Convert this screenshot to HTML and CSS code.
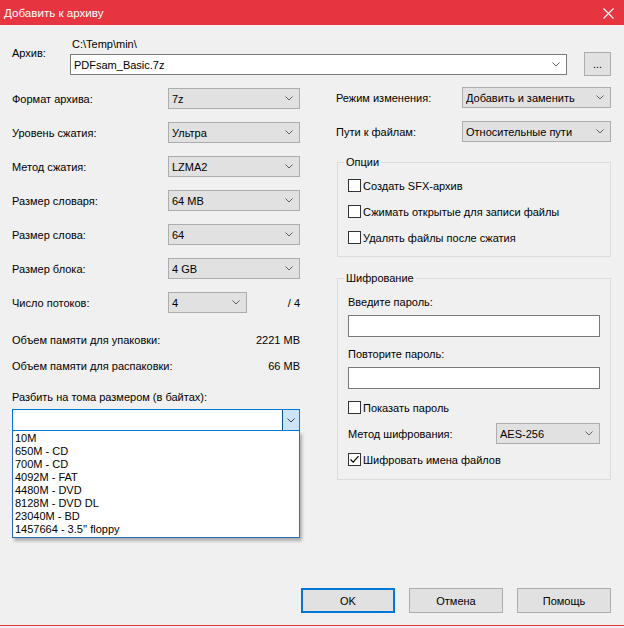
FILE: index.html
```html
<!DOCTYPE html>
<html lang="ru">
<head>
<meta charset="utf-8">
<title>Добавить к архиву</title>
<link rel="stylesheet" href="styles.css">
</head>
<body>
<div class="window">
  <header class="titlebar">
    <span class="title">Добавить к архиву</span>
    <svg class="close" width="11" height="11" viewBox="0 0 11 11"><path d="M0.5 0.5 L10.5 10.5 M10.5 0.5 L0.5 10.5" stroke="#fff" stroke-width="1.1" fill="none"/></svg>
  </header>

  <main class="content">
    <section class="archive">
      <span class="archive-label">Архив:</span>
      <span class="archive-path">C:\Temp\min\</span>
      <div class="combo combo-white archive-combo"><span class="combo-text">PDFsam_Basic.7z</span><svg class="chev" width="8" height="5" viewBox="0 0 8 5"><path d="M0.5 0.5 L4 4 L7.5 0.5" fill="none" stroke="#606060"/></svg></div>
      <div class="btn btn-browse">...</div>
    </section>

    <div class="columns">
      <div class="col-left">
        <div class="row"><span class="lbl">Формат архива:</span><div class="combo w132"><span class="combo-text">7z</span><svg class="chev" width="8" height="5" viewBox="0 0 8 5"><path d="M0.5 0.5 L4 4 L7.5 0.5" fill="none" stroke="#606060"/></svg></div></div>
        <div class="row"><span class="lbl">Уровень сжатия:</span><div class="combo w132"><span class="combo-text">Ультра</span><svg class="chev" width="8" height="5" viewBox="0 0 8 5"><path d="M0.5 0.5 L4 4 L7.5 0.5" fill="none" stroke="#606060"/></svg></div></div>
        <div class="row"><span class="lbl">Метод сжатия:</span><div class="combo w132"><span class="combo-text">LZMA2</span><svg class="chev" width="8" height="5" viewBox="0 0 8 5"><path d="M0.5 0.5 L4 4 L7.5 0.5" fill="none" stroke="#606060"/></svg></div></div>
        <div class="row"><span class="lbl">Размер словаря:</span><div class="combo w132"><span class="combo-text">64 MB</span><svg class="chev" width="8" height="5" viewBox="0 0 8 5"><path d="M0.5 0.5 L4 4 L7.5 0.5" fill="none" stroke="#606060"/></svg></div></div>
        <div class="row"><span class="lbl">Размер слова:</span><div class="combo w132"><span class="combo-text">64</span><svg class="chev" width="8" height="5" viewBox="0 0 8 5"><path d="M0.5 0.5 L4 4 L7.5 0.5" fill="none" stroke="#606060"/></svg></div></div>
        <div class="row"><span class="lbl">Размер блока:</span><div class="combo w132"><span class="combo-text">4 GB</span><svg class="chev" width="8" height="5" viewBox="0 0 8 5"><path d="M0.5 0.5 L4 4 L7.5 0.5" fill="none" stroke="#606060"/></svg></div></div>
        <div class="row"><span class="lbl">Число потоков:</span><div class="combo w79"><span class="combo-text">4</span><svg class="chev" width="8" height="5" viewBox="0 0 8 5"><path d="M0.5 0.5 L4 4 L7.5 0.5" fill="none" stroke="#606060"/></svg></div><span class="of">/ 4</span></div>

        <div class="mem mem1"><span>Объем памяти для упаковки:</span><span>2221 MB</span></div>
        <div class="mem mem2"><span>Объем памяти для распаковки:</span><span>66 MB</span></div>

        <div class="split-label">Разбить на тома размером (в байтах):</div>
        <div class="split">
          <div class="split-combo">
            <span class="split-text"></span>
            <span class="split-btn"><svg width="8" height="5" viewBox="0 0 8 5"><path d="M0.5 0.5 L4 4 L7.5 0.5" fill="none" stroke="#404040"/></svg></span>
          </div>
          <ul class="dropdown">
            <li>10M</li>
            <li>650M - CD</li>
            <li>700M - CD</li>
            <li>4092M - FAT</li>
            <li>4480M - DVD</li>
            <li>8128M - DVD DL</li>
            <li>23040M - BD</li>
            <li>1457664 - 3.5'' floppy</li>
          </ul>
        </div>
      </div>

      <div class="col-right">
        <div class="rrow"><span class="rlbl">Режим изменения:</span><div class="combo w149"><span class="combo-text">Добавить и заменить</span><svg class="chev" width="8" height="5" viewBox="0 0 8 5"><path d="M0.5 0.5 L4 4 L7.5 0.5" fill="none" stroke="#606060"/></svg></div></div>
        <div class="rrow"><span class="rlbl">Пути к файлам:</span><div class="combo w149"><span class="combo-text">Относительные пути</span><svg class="chev" width="8" height="5" viewBox="0 0 8 5"><path d="M0.5 0.5 L4 4 L7.5 0.5" fill="none" stroke="#606060"/></svg></div></div>

        <fieldset class="group group-options">
          <legend>Опции</legend>
          <div class="check first"><span class="box"></span><span>Создать SFX-архив</span></div>
          <div class="check"><span class="box"></span><span>Сжимать открытые для записи файлы</span></div>
          <div class="check"><span class="box"></span><span>Удалять файлы после сжатия</span></div>
        </fieldset>

        <fieldset class="group group-enc">
          <legend>Шифрование</legend>
          <div class="enc-label first">Введите пароль:</div>
          <div class="input"></div>
          <div class="enc-label">Повторите пароль:</div>
          <div class="input"></div>
          <div class="check show-pass"><span class="box"></span><span>Показать пароль</span></div>
          <div class="enc-method"><span>Метод шифрования:</span><div class="combo w104"><span class="combo-text">AES-256</span><svg class="chev" width="8" height="5" viewBox="0 0 8 5"><path d="M0.5 0.5 L4 4 L7.5 0.5" fill="none" stroke="#606060"/></svg></div></div>
          <div class="check enc-names"><span class="box"><svg width="11" height="11" viewBox="0 0 11 11"><path d="M1.5 5.5 L4.2 8.2 L9.5 2.2" fill="none" stroke="#000" stroke-width="1.2"/></svg></span><span>Шифровать имена файлов</span></div>
        </fieldset>
      </div>
    </div>
  </main>

  <footer class="footer">
    <div class="btn btn-ok">OK</div>
    <div class="btn">Отмена</div>
    <div class="btn">Помощь</div>
  </footer>
  <div class="bottom-line"></div>
</div>
</body>
</html>
```

FILE: styles.css
```css
* { box-sizing: border-box; }

html, body {
  margin: 0;
  padding: 0;
}

body {
  width: 624px;
  height: 628px;
  overflow: hidden;
  background: #f0f0f0;
  font-family: "Liberation Sans", Arial, sans-serif;
  font-size: 11px;
  line-height: 14px;
  color: #000;
}

.window {
  width: 624px;
  height: 628px;
  display: flex;
  flex-direction: column;
}

.titlebar {
  height: 25px;
  flex: none;
  background: #e63540;
  color: #fff;
  display: flex;
  align-items: center;
  padding: 0 10px 0 4px;
}

.title {
  font-size: 11.6px;
  flex: 1;
}

.close {
  display: block;
  margin-top: 1px;
}

.content {
  padding: 0 13px 0 12px;
}

/* archive row */
.archive {
  margin-top: 13px;
  display: grid;
  grid-template-columns: 58px 1fr 17px 27px;
  grid-template-rows: 16px 22px;
}

.archive-label {
  grid-row: 1 / 3;
  grid-column: 1;
  padding-top: 8px;
}

.archive-path {
  grid-row: 1;
  grid-column: 2;
  padding-left: 2px;
  line-height: 13px;
}

.archive-combo {
  grid-row: 2;
  grid-column: 2;
  height: 22px;
}

.btn-browse {
  grid-row: 2;
  grid-column: 4;
  margin-top: -2px;
  height: 24px;
  width: 27px;
  line-height: 18px;
}

/* combo */
.combo {
  height: 21px;
  background: #e1e1e1;
  border: 1px solid #adadad;
  display: flex;
  align-items: center;
  padding: 0 6px 0 3px;
}

.combo-white {
  background: #fff;
  border-color: #7a7a7a;
}

.combo-text {
  flex: 1;
  white-space: nowrap;
  overflow: hidden;
}

.chev {
  display: block;
  flex: none;
}

.w132 { width: 132px; }
.w79 { width: 79px; }
.w149 { width: 149px; }
.w104 { width: 104px; }

/* columns */
.columns {
  margin-top: 12px;
  display: flex;
  gap: 36px;
}

.col-left {
  width: 288px;
  flex: none;
}

.col-right {
  width: 275px;
  flex: none;
  margin-top: -1px;
}

.row {
  display: flex;
  align-items: center;
  height: 21px;
  margin-bottom: 13px;
}

.lbl {
  width: 156px;
  flex: none;
}

.of {
  margin-left: auto;
}

.mem {
  display: flex;
  justify-content: space-between;
  height: 14px;
}

.mem1 { margin-top: 20px; }
.mem2 { margin-top: 12px; }

.split-label {
  margin-top: 17px;
  height: 14px;
}

.split {
  position: relative;
  margin-top: 5px;
}

.split-combo {
  height: 22px;
  background: #fff;
  border: 1px solid #0078d7;
  display: flex;
}

.split-text { flex: 1; }

.split-btn {
  width: 17px;
  background: #cce4f7;
  border-left: 1px solid #005499;
  display: flex;
  align-items: center;
  justify-content: center;
}

.dropdown {
  position: absolute;
  left: 0;
  top: 22px;
  width: 288px;
  height: 107px;
  margin: 0;
  padding: 0;
  list-style: none;
  background: #fff;
  border: 1px solid #2a6cb8;
  border-top: none;
  box-shadow: 2px 3px 3px rgba(0, 0, 0, 0.28);
  z-index: 2;
}

.dropdown li {
  height: 13px;
  line-height: 13px;
  padding-left: 2px;
  font-size: 11px;
}

.dropdown li:first-child {
  margin-top: 1px;
}

/* right column */
.rrow {
  display: flex;
  align-items: center;
  height: 21px;
  margin-bottom: 13px;
}

.rrow + .rrow { margin-bottom: 0; }

.rlbl {
  width: 126px;
  flex: none;
}

.group {
  margin: 0 0 0 1px;
  padding: 0 10px 0 10px;
  border: 1px solid #dcdcdc;
  width: 274px;
  min-width: 0;
}

.group legend {
  padding: 0 2px;
  margin-left: -4px;
  line-height: 14px;
}

.group-options {
  margin-top: 13px;
  padding-bottom: 12px;
}

.check {
  display: flex;
  align-items: center;
  gap: 2px;
  height: 13px;
  margin-top: 13px;
}

.check.first { margin-top: 10px; }

.box {
  width: 13px;
  height: 13px;
  flex: none;
  background: #fff;
  border: 1px solid #333;
  display: flex;
  align-items: center;
  justify-content: center;
}

.group-enc {
  margin-top: 14px;
  padding-bottom: 13px;
}

.enc-label {
  height: 14px;
  margin-top: 10px;
}

.input {
  height: 22px;
  margin-top: 6px;
  background: #fff;
  border: 1px solid #7a7a7a;
}

.show-pass { margin-top: 12px; }

.enc-method {
  display: flex;
  align-items: center;
  justify-content: space-between;
  margin-top: 9px;
  height: 21px;
}

.enc-names { margin-top: 9px; }

/* buttons */
.btn {
  background: #e1e1e1;
  border: 1px solid #adadad;
  display: flex;
  align-items: center;
  justify-content: center;
}

.footer {
  margin-top: auto;
  display: flex;
  justify-content: flex-end;
  gap: 14px;
  padding: 0 13px 12px 0;
}

.footer .btn {
  width: 94px;
  height: 25px;
}

.footer .btn-ok {
  border: 2px solid #0078d7;
}

.bottom-line {
  height: 1px;
  background: #e63540;
  margin-bottom: 2px;
  flex: none;
}
```
